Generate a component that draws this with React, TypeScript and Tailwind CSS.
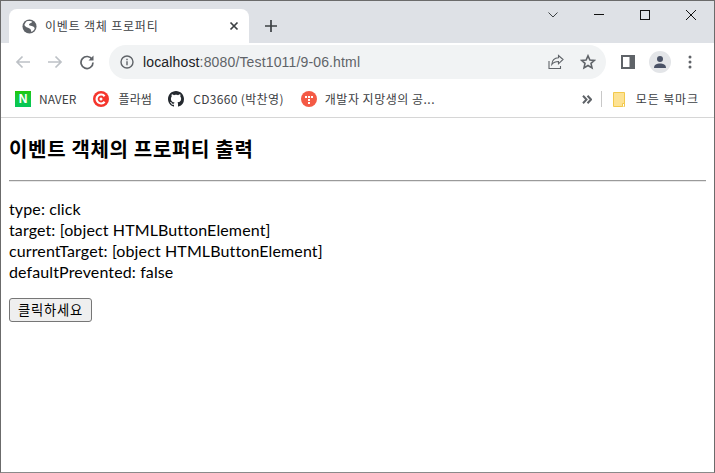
import React from 'react';

const ui = "font-['Noto_Sans_CJK_KR','Noto_Sans',sans-serif]";

const Bookmark: React.FC<{ icon: React.ReactNode; label: string; className?: string; labelClass?: string }> = ({ icon, label, className, labelClass }) => (
  <div className={`flex items-center ${className ?? ''}`}>
    {icon}
    <span className={`text-[12px] text-[#3c4043] whitespace-nowrap ${labelClass ?? ''}`}>{label}</span>
  </div>
);

export default function App() {
  return (
    <div className={`h-[473px] w-[715px] overflow-hidden border border-[#6b6b6b] border-b-[#8a8a8a] bg-white flex flex-col ${ui}`}>
      {/* tab strip */}
      <div className="h-[42px] shrink-0 bg-[#dee1e6] flex items-end pl-[8px] relative">
        <div className="h-[34px] w-[240px] bg-white rounded-t-[8px] flex items-center pl-[13px] pr-[10px]">
          <svg width="15" height="15" viewBox="0 0 16 16">
            <circle cx="8" cy="8" r="7.5" fill="#5f6368" />
            <path d="M5 2.5 C7 1.8 10 2 11 3 C10.5 4.5 8.5 4.5 7.5 5.5 C7 6.8 9 7 10.5 7.5 C12.5 8 13.5 9 13.5 10.5 C12.5 12.5 11 13.5 10 13.8 C9.5 12 9.5 10.5 8 10 C6 9.5 3.5 8.5 2.5 6.5 C3 5 4 3.5 5 2.5 Z" fill="#ffffff" />
          </svg>
          <span className="ml-[8px] text-[12px] text-[#3c4043] flex-1 whitespace-nowrap tracking-[0.8px]">이벤트 객체 프로퍼티</span>
          <svg width="10" height="10" viewBox="0 0 10 10" stroke="#3c4043" strokeWidth="1.7" fill="none">
            <path d="M1.5 1.5 L8.5 8.5 M8.5 1.5 L1.5 8.5" />
          </svg>
        </div>
        <svg className="ml-[16px] mb-[11px]" width="12" height="12" viewBox="0 0 12 12" stroke="#3c4043" strokeWidth="1.7" fill="none">
          <path d="M6 0 V12 M0 6 H12" />
        </svg>
        <div className="absolute right-0 top-[9px] flex items-center">
          <svg className="mr-[36px]" width="10" height="6" viewBox="0 0 10 6" stroke="#3c4043" fill="none"><path d="M0.5 0.5 L5 5 L9.5 0.5" /></svg>
          <svg className="mr-[36px]" width="10" height="2" viewBox="0 0 10 2" stroke="#111" fill="none"><path d="M0 0.5 H10" /></svg>
          <svg className="mr-[36px]" width="10" height="10" viewBox="0 0 10 10" stroke="#111" fill="none"><rect x="0.5" y="0.5" width="9" height="9" /></svg>
          <svg className="mr-[18px]" width="10" height="10" viewBox="0 0 10 10" stroke="#111" fill="none"><path d="M0 0 L10 10 M10 0 L0 10" /></svg>
        </div>
      </div>

      {/* toolbar */}
      <div className="h-[38px] shrink-0 bg-white flex items-center pl-[14px]">
        <svg width="16" height="16" viewBox="0 0 16 16" stroke="#bdc1c6" strokeWidth="1.7" fill="none"><path d="M15 8 H2 M7.5 2.5 L2 8 L7.5 13.5" /></svg>
        <svg className="ml-[16px]" width="16" height="16" viewBox="0 0 16 16" stroke="#bdc1c6" strokeWidth="1.7" fill="none"><path d="M1 8 H14 M8.5 2.5 L14 8 L8.5 13.5" /></svg>
        <svg className="ml-[16px]" width="16" height="16" viewBox="0 0 16 16" fill="none">
          <path d="M13.2 5.5 A6 6 0 1 0 14 8.5" stroke="#5f6368" strokeWidth="1.7" />
          <path d="M14.5 1.5 V6.5 H9.5 Z" fill="#5f6368" />
        </svg>
        <div className="ml-[14px] h-[34px] w-[497px] rounded-full bg-[#f1f3f4] flex items-center pl-[11px] pr-[10px]">
          <svg width="14" height="14" viewBox="0 0 14 14" fill="none">
            <circle cx="7" cy="7" r="6" stroke="#5f6368" strokeWidth="1.4" />
            <path d="M7 6.2 V10.2 M7 3.8 V5.2" stroke="#5f6368" strokeWidth="1.4" />
          </svg>
          <span className="ml-[9px] text-[14px] tracking-[0.15px] text-[#5f6368] flex-1 whitespace-nowrap font-['Liberation_Sans',sans-serif]">
            <span className="text-[#202124]">localhost</span>:8080/Test1011/9-06.html
          </span>
          <svg width="16" height="16" viewBox="0 0 16 16" stroke="#5f6368" strokeWidth="1.1" fill="none">
            <path d="M1 7 V14.5 H12.5 V12 M15 5.5 L10.5 1.5 V3.8 C6 4 4 7 3.8 10.5 C5.5 8.3 7.5 7.5 10.5 7.5 V9.8 Z" />
          </svg>
          <svg className="ml-[16px]" width="16" height="16" viewBox="0 0 16 16" stroke="#5f6368" strokeWidth="1.6" fill="none">
            <path d="M8 1.8 L9.9 6 L14.4 6.4 L11 9.4 L12 13.9 L8 11.5 L4 13.9 L5 9.4 L1.6 6.4 L6.1 6 Z" />
          </svg>
        </div>
        <svg className="ml-[15px]" width="14" height="14" viewBox="0 0 14 14"><path d="M0 0 H14 V14 H0 Z M2 2 V12 H8.5 V2 Z" fill="#5f6368" fillRule="evenodd" /></svg>
        <div className="ml-[14px] h-[22px] w-[22px] rounded-full bg-[#e3e5e8] flex items-center justify-center">
          <svg width="14" height="14" viewBox="0 0 14 14" fill="#4a5266"><circle cx="7" cy="4" r="3" /><path d="M1 13 C1 9.5 4 8.5 7 8.5 C10 8.5 13 9.5 13 13 Z" /></svg>
        </div>
        <svg className="ml-[17px]" width="4" height="14" viewBox="0 0 4 14" fill="#5f6368"><circle cx="2" cy="2" r="1.5" /><circle cx="2" cy="7" r="1.5" /><circle cx="2" cy="12" r="1.5" /></svg>
      </div>

      {/* bookmarks bar */}
      <div className="h-[37px] shrink-0 bg-white border-b border-[#d6d6d6] flex items-center pl-[14px]">
        <Bookmark
          label="NAVER"
          labelClass="ml-[8px]"
          icon={<div className="h-[16px] w-[16px] bg-gradient-to-b from-[#1ec800] to-[#03c75a] text-white text-[12px] font-bold leading-[16px] text-center font-['Liberation_Sans',sans-serif]">N</div>}
        />
        <Bookmark
          className="ml-[17px]"
          label="플라썸"
          labelClass="ml-[9px] tracking-[0.2px]"
          icon={
            <svg width="16" height="16" viewBox="0 0 16 16">
              <circle cx="8" cy="8" r="8" fill="#f5352c" />
              <path d="M11.6 5.2 A4.5 4.5 0 1 0 11.6 10.8" stroke="#ffffff" strokeWidth="2.2" fill="none" />
              <circle cx="8" cy="8" r="1.5" fill="#ffffff" />
            </svg>
          }
        />
        <Bookmark
          className="ml-[16px]"
          label="CD3660 (박찬영)"
          labelClass="ml-[9px] tracking-[0.35px]"
          icon={
            <svg width="16" height="16" viewBox="0 0 16 16" fill="#24292f">
              <path d="M8 0C3.58 0 0 3.58 0 8c0 3.54 2.29 6.53 5.47 7.59.4.07.55-.17.55-.38 0-.19-.01-.82-.01-1.49-2.01.37-2.53-.49-2.69-.94-.09-.23-.48-.94-.82-1.13-.28-.15-.68-.52-.01-.53.63-.01 1.08.58 1.23.82.72 1.21 1.87.87 2.33.66.07-.52.28-.87.51-1.07-1.78-.2-3.64-.89-3.64-3.95 0-.87.31-1.59.82-2.15-.08-.2-.36-1.02.08-2.12 0 0 .67-.21 2.2.82.64-.18 1.32-.27 2-.27s1.36.09 2 .27c1.53-1.04 2.2-.82 2.2-.82.44 1.1.16 1.92.08 2.12.51.56.82 1.27.82 2.15 0 3.07-1.87 3.75-3.65 3.95.29.25.54.73.54 1.48 0 1.07-.01 1.93-.01 2.2 0 .21.15.46.55.38A8.01 8.01 0 0016 8c0-4.42-3.58-8-8-8z" />
            </svg>
          }
        />
        <Bookmark
          className="ml-[17px]"
          label="개발자 지망생의 공..."
          labelClass="ml-[8px] tracking-[0.5px]"
          icon={
            <svg width="16" height="16" viewBox="0 0 16 16">
              <circle cx="8" cy="8" r="8" fill="#f45a45" />
              <g fill="#ffffff">
                <rect x="4" y="5" width="2" height="2" />
                <rect x="7" y="5" width="2" height="2" />
                <rect x="10" y="5" width="2" height="2" />
                <rect x="7" y="8" width="2" height="2" />
                <rect x="7" y="11" width="2" height="2" />
              </g>
            </svg>
          }
        />
        <svg className="ml-auto" width="10" height="9" viewBox="0 0 10 9" stroke="#5f6368" strokeWidth="2" fill="none">
          <path d="M1 0.8 L4.5 4.5 L1 8.2 M5.5 0.8 L9 4.5 L5.5 8.2" />
        </svg>
        <div className="ml-[9px] h-[16px] w-px bg-[#c8c8c8]" />
        <Bookmark
          className="ml-[11px] mr-[15px]"
          label="모든 북마크"
          labelClass="ml-[11px] tracking-[0.9px]"
          icon={
            <svg width="12" height="15" viewBox="0 0 12 15">
              <path d="M0.5 0.5 H11.5 V14.5 H0.5 Z" fill="#fde293" stroke="#f2c94c" />
              <path d="M9.5 14.5 V11.5 H11.5 V14.5" fill="#ffffff" stroke="#f2c94c" />
            </svg>
          }
        />
      </div>

      {/* page */}
      <div className="flex-1 bg-white px-[8px] text-black font-['Lato','Noto_Sans_CJK_KR',sans-serif]">
        <h3 className="mt-[17px] text-[20px] tracking-[0.67px] leading-[27px] font-bold font-['Noto_Sans_CJK_KR',sans-serif]">이벤트 객체의 프로퍼티 출력</h3>
        <hr className="mt-[18px] border-t-0 h-[2px] bg-[#9a9a9a] border-b border-[#e8e8e8]" />
        <div className="mt-[16px] text-[16px] tracking-[0.12px] leading-[21px]">
          <div>type: click</div>
          <div>target: [object HTMLButtonElement]</div>
          <div>currentTarget: [object HTMLButtonElement]</div>
          <div>defaultPrevented: false</div>
        </div>
        <button className="mt-[16px] block h-[24px] w-[83px] rounded-[3px] border border-[#767676] bg-[#efefef] text-[13.3px] tracking-[0.8px] leading-none font-['Noto_Sans_CJK_KR',sans-serif]">클릭하세요</button>
      </div>
    </div>
  );
}
